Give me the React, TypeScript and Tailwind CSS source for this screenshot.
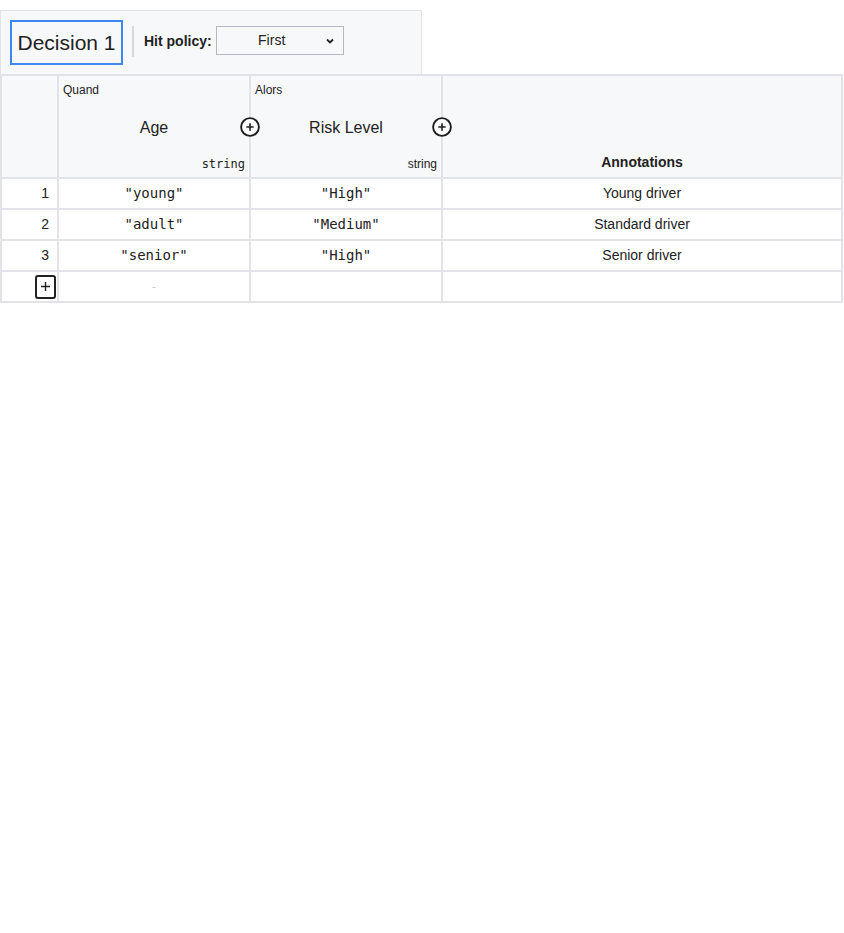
const sans = { fontFamily: '"Liberation Sans", Arial, sans-serif' }
const mono = { fontFamily: '"DejaVu Sans Mono", "Liberation Mono", monospace' }

interface Rule {
  input: string
  output: string
  note: string
}

const rules: Rule[] = [
  { input: '"young"', output: '"High"', note: 'Young driver' },
  { input: '"adult"', output: '"Medium"', note: 'Standard driver' },
  { input: '"senior"', output: '"High"', note: 'Senior driver' },
]

function AddColumnIcon() {
  return (
    <svg width="20" height="20" viewBox="0 0 20 20" className="absolute right-[-11px] top-[41px] z-10">
      <circle cx="10" cy="10" r="8.9" fill="white" stroke="#1f1f1f" strokeWidth="1.9" />
      <path d="M10 6.3v7.4M6.3 10h7.4" stroke="#1f1f1f" strokeWidth="1.6" />
    </svg>
  )
}

function ColumnHeader({ kind, name, type, typeMono }: { kind: string; name: string; type: string; typeMono?: boolean }) {
  return (
    <div className="relative flex flex-col bg-[#f7f8fa]">
      <div className="pl-[4px] pt-[7px] text-[12px] leading-[14px] text-[#222]">{kind}</div>
      <div className="flex flex-1 items-center justify-center pt-[1px] text-[16px] text-[#222]">{name}</div>
      <div
        className="pb-[6px] pr-[4px] text-right text-[12px] leading-[14px] text-[#222]"
        style={typeMono ? mono : undefined}
      >
        {type}
      </div>
      <AddColumnIcon />
    </div>
  )
}

export default function App() {
  return (
    <div className="min-h-[933px] bg-white pt-[10px] text-[#222]" style={sans}>
      <div className="flex h-[64px] w-[422px] items-start border-l border-r border-t border-[#e1e3e8] bg-[#f7f8fa] pl-[9px] pt-[9px]">
        <div className="flex h-[45px] w-[113px] items-center justify-center border-2 border-[#3d87f0] text-[21px] text-[#222]">
          Decision 1
        </div>
        <div className="ml-[9px] mt-[6px] h-[31px] w-[2px] bg-[#d6d8dc]" />
        <div className="ml-[10px] mt-[11px] text-[14px] font-bold">Hit policy:</div>
        <div className="relative ml-[4px] mt-[6px] flex h-[29px] w-[128px] items-center justify-center border border-[#b5b7c4] bg-[#f7f8fa] text-[14px]">
          <span className="pr-[16px]">First</span>
          <svg width="10" height="10" viewBox="0 0 10 10" className="absolute right-[8px] top-[9px]">
            <path d="M2 3.5l3 3 3-3" fill="none" stroke="#222" strokeWidth="1.8" />
          </svg>
        </div>
      </div>

      <div className="grid w-[843px] grid-cols-[55px_190px_190px_398px] grid-rows-[101px_29px_29px_29px_29px] gap-[2px] bg-[#e1e3e8] p-[2px] text-[14px]">
        <div className="bg-[#f7f8fa]" />
        <ColumnHeader kind="Quand" name="Age" type="string" typeMono />
        <ColumnHeader kind="Alors" name="Risk Level" type="string" />
        <div className="flex items-end justify-center bg-[#f7f8fa] pb-[4px] font-bold">Annotations</div>

        {rules.map((r, i) => (
          <div key={r.note} className="contents">
            <div className="flex items-center justify-end bg-white pr-[8px]">{i + 1}</div>
            <div className="flex items-center justify-center bg-white" style={mono}>
              {r.input}
            </div>
            <div className="flex items-center justify-center bg-white" style={mono}>
              {r.output}
            </div>
            <div className="flex items-center justify-center bg-white">{r.note}</div>
          </div>
        ))}

        <div className="flex items-center justify-end bg-white pr-[1px]">
          <div className="flex h-[24px] w-[21px] items-center justify-center rounded-[3px] border-2 border-[#222]">
            <svg width="11" height="11" viewBox="0 0 11 11">
              <path d="M5.5 1v9M1 5.5h9" stroke="#222" strokeWidth="1.4" />
            </svg>
          </div>
        </div>
        <div className="flex items-center justify-center bg-white text-[12px] text-[#c4c6cc]">-</div>
        <div className="bg-white" />
        <div className="bg-white" />
      </div>
    </div>
  )
}
